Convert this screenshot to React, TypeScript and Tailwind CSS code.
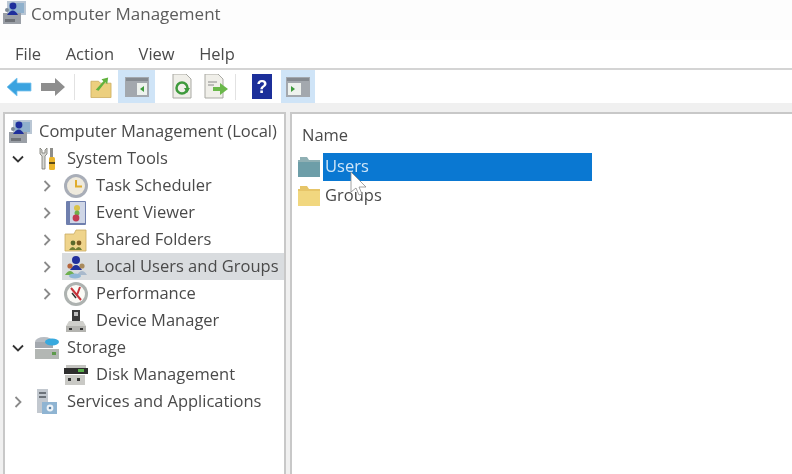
const FONT = "font-['Open_Sans','Noto_Sans',sans-serif]";

function Chevron({ open }: { open?: boolean }) {
  return (
    <svg width="14" height="14" viewBox="0 0 14 14" fill="none" stroke={open ? "#333" : "#8a8a8a"} strokeWidth="1.8">
      {open ? <path d="M2 4.5 7 9.5 12 4.5" /> : <path d="M4.5 2 9.5 7 4.5 12" />}
    </svg>
  );
}

function ComputerIcon() {
  return (
    <svg width="24" height="24" viewBox="0 0 24 24">
      <rect x="5" y="0" width="19" height="14" fill="#b9c6d4" />
      <rect x="7" y="2" width="15" height="10" fill="#8fb0cc" />
      <rect x="1" y="12" width="18" height="11" fill="#9a9fa6" />
      <rect x="3" y="18" width="10" height="3" fill="#6e7278" />
      <circle cx="11" cy="5" r="3.4" fill="#1f2f9c" />
      <path d="M5 14 Q11 5 16 14Z" fill="#1f2f9c" />
      <circle cx="5" cy="9" r="2" fill="#7d8a96" />
    </svg>
  );
}

function ToolsIcon() {
  return (
    <svg width="20" height="24" viewBox="0 0 20 24">
      <path d="M3 1v6l2 2v13h3V9l2-2V1L8 3v3H5V3Z" fill="#d6d6d2" stroke="#77776f" strokeWidth="0.8" />
      <rect x="13" y="1" width="3" height="9" fill="#8e8e8a" />
      <rect x="12" y="10" width="6" height="13" rx="1.5" fill="#eab52c" />
      <rect x="12" y="15" width="6" height="2" fill="#5b4a18" />
    </svg>
  );
}

function ClockIcon() {
  return (
    <svg width="26" height="26" viewBox="0 0 26 26">
      <circle cx="13" cy="13" r="12" fill="#a9aeb8" />
      <circle cx="13" cy="13" r="9" fill="#efeadd" />
      <path d="M13 7v6.5h6" fill="none" stroke="#e0ac2b" strokeWidth="2" />
    </svg>
  );
}

function EventIcon() {
  return (
    <svg width="22" height="24" viewBox="0 0 22 24">
      <rect x="1" y="0" width="20" height="24" rx="1" fill="#6f7fae" />
      <rect x="5" y="1" width="15" height="21" fill="#cfd6e6" />
      <circle cx="12" cy="7" r="3" fill="#d9c24a" />
      <circle cx="12" cy="12" r="2.5" fill="#6fae4d" />
      <circle cx="11" cy="17" r="3.4" fill="#c23a55" />
    </svg>
  );
}

function SharedIcon() {
  return (
    <svg width="24" height="24" viewBox="0 0 24 24">
      <path d="M1 6h9l2-4h10v21H1Z" fill="#efd48c" stroke="#c9ab62" strokeWidth="0.8" />
      <circle cx="9" cy="15" r="2.4" fill="#5a6a2c" />
      <circle cx="15" cy="15" r="2.4" fill="#7b5a20" />
      <path d="M5 22q4-6 7 0M11 22q4-6 7 0" fill="#6f7d32" />
    </svg>
  );
}

function UsersIcon() {
  return (
    <svg width="24" height="24" viewBox="0 0 24 24">
      <circle cx="12" cy="5" r="4" fill="#22309c" />
      <path d="M6 15q6-10 12 0Z" fill="#22309c" />
      <circle cx="6" cy="11" r="2.6" fill="#b5653c" />
      <path d="M1 20q5-8 10 0Z" fill="#6fb04f" />
      <circle cx="18" cy="11" r="2.6" fill="#a98a5c" />
      <path d="M13 20q5-8 10 0Z" fill="#a9b9cc" />
      <ellipse cx="11" cy="21" rx="6" ry="2.5" fill="#8fb6d6" />
    </svg>
  );
}

function PerfIcon() {
  return (
    <svg width="26" height="26" viewBox="0 0 26 26">
      <circle cx="13" cy="13" r="12" fill="#adb2b0" />
      <circle cx="13" cy="13" r="9" fill="#fafaf6" />
      <path d="M8 7 18 19M17 6l-3 8" stroke="#c8333a" strokeWidth="2" fill="none" />
      <path d="M9 12 13 17" stroke="#333" strokeWidth="1.5" />
    </svg>
  );
}

function DeviceIcon() {
  return (
    <svg width="22" height="24" viewBox="0 0 22 24">
      <rect x="7" y="1" width="8" height="11" fill="#3a3a3a" />
      <rect x="9" y="3" width="4" height="4" fill="#bdbdbd" />
      <path d="M4 12h14l3 5H1Z" fill="#cfcfcb" />
      <rect x="1" y="17" width="20" height="6" fill="#b4b4b0" />
      <rect x="4" y="19" width="3" height="2" fill="#333" />
      <rect x="15" y="19" width="3" height="2" fill="#333" />
    </svg>
  );
}

function StorageIcon() {
  return (
    <svg width="26" height="24" viewBox="0 0 26 24">
      <ellipse cx="10" cy="6" rx="9" ry="5" fill="#b7bcc2" />
      <rect x="1" y="6" width="18" height="6" fill="#a4a9af" />
      <ellipse cx="18" cy="6" rx="7" ry="3.4" fill="#38a9de" />
      <rect x="1" y="13" width="24" height="10" fill="#b3b7b4" />
      <rect x="18" y="16" width="4" height="3" fill="#5d9a4c" />
    </svg>
  );
}

function DiskIcon() {
  return (
    <svg width="24" height="22" viewBox="0 0 24 22">
      <rect x="2" y="1" width="20" height="3" fill="#c4c4c0" />
      <rect x="0" y="4" width="24" height="6" fill="#2e2e2e" />
      <rect x="14" y="5" width="6" height="3" fill="#58b04a" />
      <rect x="1" y="11" width="20" height="10" fill="#c9c9c5" />
      <rect x="4" y="14" width="3" height="3" fill="#333" />
      <rect x="13" y="14" width="3" height="3" fill="#333" />
    </svg>
  );
}

function ServicesIcon() {
  return (
    <svg width="22" height="26" viewBox="0 0 22 26">
      <rect x="1" y="0" width="11" height="24" fill="#c2c8cf" />
      <rect x="3" y="3" width="7" height="2" fill="#6d737a" />
      <rect x="3" y="7" width="7" height="2" fill="#6d737a" />
      <rect x="6" y="13" width="15" height="12" fill="#8fb4d2" />
      <circle cx="14" cy="19" r="3.4" fill="#eef3f7" />
      <circle cx="14" cy="19" r="1.3" fill="#5d83a5" />
    </svg>
  );
}

function Folder({ color, tab }: { color: string; tab: string }) {
  return (
    <svg width="22" height="20" viewBox="0 0 22 20">
      <path d="M0 3h2V0h7l2 3h11v17H0Z" fill={tab} />
      <rect x="0" y="5" width="22" height="15" fill={color} />
    </svg>
  );
}

function ToolbarIcons() {
  return (
    <div className="flex h-[33px] items-center">
      <svg className="ml-[6px]" width="26" height="20" viewBox="0 0 26 20">
        <path d="M1 10 11 1v5h14v8H11v5Z" fill="#3aa3e0" stroke="#7cc4ee" strokeWidth="0.8" />
      </svg>
      <svg className="ml-[8px]" width="26" height="20" viewBox="0 0 26 20">
        <path d="M25 10 15 1v5H1v8h14v5Z" fill="#8e8e8e" />
      </svg>
      <div className="ml-[8px] h-[26px] w-px bg-[#e2e2e2]" />
      <svg className="ml-[15px]" width="22" height="24" viewBox="0 0 23 24">
        <path d="M1 6h8l2 2h11v15H1Z" fill="#eccf7e" stroke="#c9a95c" strokeWidth="0.8" />
        <path d="M6 15 14 6l-2-2 7-2-1 7-2-2-7 9Z" fill="#62b23e" />
      </svg>
      <div className="ml-[6px] flex h-[33px] w-[37px] items-center justify-center bg-[#cfe4f7]">
        <svg width="24" height="20" viewBox="0 0 24 20">
          <rect width="24" height="20" fill="#a3a8ae" />
          <rect x="1" y="1" width="22" height="3" fill="#858a90" />
          <rect x="12" y="6" width="10" height="12" fill="#eef2ee" />
          <path d="M19 9v6l-4-3Z" fill="#3e9a3c" />
        </svg>
      </div>
      <svg className="ml-[17px]" width="20" height="25" viewBox="0 0 20 25">
        <path d="M1 0h13l5 5v19H1Z" fill="#f0efe9" stroke="#a9a9a3" />
        <circle cx="10" cy="14" r="5.5" fill="none" stroke="#3e9a3c" strokeWidth="2.5" />
        <path d="M12 14h6l-3 5Z" fill="#3e9a3c" />
      </svg>
      <svg className="ml-[12px]" width="24" height="25" viewBox="0 0 24 25">
        <path d="M1 0h13l5 5v19H1Z" fill="#f0efe9" stroke="#a9a9a3" />
        <path d="M4 8h9M4 11h6" stroke="#888" />
        <path d="M9 13h7v-4l8 6-8 6v-4H9Z" fill="#6ab84a" />
      </svg>
      <div className="ml-[7px] h-[26px] w-px bg-[#e2e2e2]" />
      <svg className="ml-[16px]" width="20" height="25" viewBox="0 0 20 25">
        <rect width="20" height="25" fill="#1c2f9a" />
        <text x="10" y="19" textAnchor="middle" fill="#fff" fontSize="18" fontWeight="700" fontFamily="Liberation Sans">?</text>
      </svg>
      <div className="ml-[9px] flex h-[33px] w-[34px] items-center justify-center bg-[#cfe4f7]">
        <svg width="24" height="20" viewBox="0 0 24 20">
          <rect width="24" height="20" fill="#a3a8ae" />
          <rect x="1" y="1" width="22" height="3" fill="#858a90" />
          <rect x="2" y="6" width="13" height="12" fill="#eef2ee" />
          <path d="M5 9v6l4-3Z" fill="#3e9a3c" />
        </svg>
      </div>
    </div>
  );
}

const TREE = [
  { label: "Computer Management (Local)", chevron: null, level: 0, icon: <ComputerIcon /> },
  { label: "System Tools", chevron: "open", level: 1, icon: <ToolsIcon /> },
  { label: "Task Scheduler", chevron: "closed", level: 2, icon: <ClockIcon /> },
  { label: "Event Viewer", chevron: "closed", level: 2, icon: <EventIcon /> },
  { label: "Shared Folders", chevron: "closed", level: 2, icon: <SharedIcon /> },
  { label: "Local Users and Groups", chevron: "closed", level: 2, icon: <UsersIcon />, selected: true },
  { label: "Performance", chevron: "closed", level: 2, icon: <PerfIcon /> },
  { label: "Device Manager", chevron: null, level: 2, icon: <DeviceIcon /> },
  { label: "Storage", chevron: "open", level: 1, icon: <StorageIcon /> },
  { label: "Disk Management", chevron: null, level: 2, icon: <DiskIcon /> },
  { label: "Services and Applications", chevron: "closed", level: 1, icon: <ServicesIcon /> },
];

function TreeRow({ row }: { row: (typeof TREE)[number] }) {
  if (row.level === 0) {
    return (
      <div className="flex h-[27px] items-center">
        <div className="ml-[3px] flex w-[31px] shrink-0 items-center">{row.icon}</div>
        <span className="whitespace-nowrap">{row.label}</span>
      </div>
    );
  }
  const isLeaf = row.level === 2;
  return (
    <div className="flex h-[27px] items-center">
      <div className={`flex shrink-0 justify-end pr-[8px] ${isLeaf ? "w-[57px]" : "w-[28px]"}`}>
        {row.chevron && <Chevron open={row.chevron === "open"} />}
      </div>
      <div className={`flex h-[27px] flex-1 items-center ${row.selected ? "bg-[#d9dcdf]" : ""}`}>
        <div className="flex w-[34px] shrink-0 items-center justify-center pr-[6px]">{row.icon}</div>
        <span className="whitespace-nowrap">{row.label}</span>
      </div>
    </div>
  );
}

export default function App() {
  return (
    <div className={`relative h-[474px] w-[792px] overflow-hidden bg-white text-[16.5px] leading-none text-[#4a4a4a] blur-[0.5px] ${FONT}`}>
      {/* titlebar */}
      <div className="flex h-[40px] items-start bg-[#fdfdfd] pl-[2px] pt-[1px]">
        <ComputerIcon />
        <span className="ml-[5px] mt-[4px] text-[17px] text-[#5c5c5c]">Computer Management</span>
      </div>

      {/* menu */}
      <div className="flex h-[30px] items-center gap-[24.5px] border-b-2 border-[#d4d4d4] pl-[15px]">
        <span>File</span>
        <span>Action</span>
        <span>View</span>
        <span>Help</span>
      </div>

      <ToolbarIcons />

      {/* panes */}
      <div className="flex h-[371px] gap-[4px] bg-[#f0f0f0] pl-[3px] pt-[9px]">
        <div className="h-full w-[283px] border-2 border-b-0 border-[#c8c8c8] bg-white pt-[4px]">
          {TREE.map((row) => (
            <TreeRow key={row.label} row={row} />
          ))}
        </div>
        <div className="relative h-full flex-1 border-2 border-b-0 border-r-0 border-[#c8c8c8] bg-white pl-[6px]">
          <div className="ml-[4px] flex h-[38px] items-center pt-[4px]">Name</div>
          <div className="flex h-[29px] items-center">
            <Folder color="#6d9ea8" tab="#8fb0b4" />
            <div className="ml-[3px] flex h-[28px] w-[269px] items-center bg-[#0a78d2] pl-[2px] text-[#cfe6f8]">
              Users
            </div>
          </div>
          <div className="flex h-[29px] items-center">
            <Folder color="#f1d77f" tab="#e6c568" />
            <span className="ml-[5px]">Groups</span>
          </div>
          <svg className="absolute left-[58px] top-[57px]" width="20" height="26" viewBox="0 0 20 26">
            <path d="M1 1v20l5-4 3 7 3-1-3-7h7Z" fill="#fff" stroke="#8a8a8a" strokeWidth="0.8" />
          </svg>
        </div>
      </div>
    </div>
  );
}
